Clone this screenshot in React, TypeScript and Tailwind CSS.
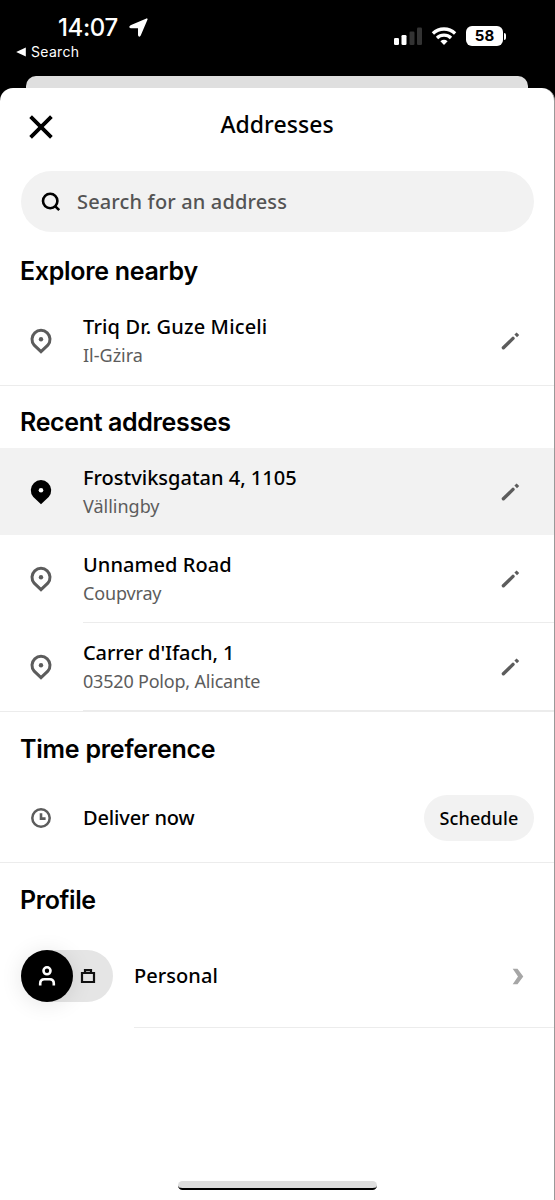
import type { ReactNode } from "react";

const body = "font-['Noto_Sans','Liberation_Sans',sans-serif]";

function PinIcon({ filled = false }: { filled?: boolean }) {
  return (
    <svg width="22" height="26" viewBox="0 0 22 26" className="block">
      <path
        d="M4.2 17.2A9 9 0 1 1 17.8 17.2L11 23.6Z"
        fill={filled ? "#000" : "none"}
        stroke={filled ? "#000" : "#5c5c5c"}
        strokeWidth={filled ? 2.4 : 3}
      />
      <circle cx="11" cy="11.2" r={filled ? 2.3 : 2.2} fill={filled ? "#fff" : "#5c5c5c"} />
    </svg>
  );
}

function PencilIcon() {
  return (
    <svg width="20" height="20" viewBox="0 0 20 20" className="block">
      <path d="M3.4 16.8L13 7.4" stroke="#5c5c5c" strokeWidth="3.4" strokeLinecap="round" />
      <path d="M14.4 3.6L16.6 1.4L19.2 4L17 6.2Z" fill="#5c5c5c" />
    </svg>
  );
}

function ClockIcon() {
  return (
    <svg width="22" height="22" viewBox="0 0 22 22" fill="none" stroke="#5c5c5c" className="block">
      <circle cx="11" cy="11" r="8.7" strokeWidth="2.5" />
      <path d="M11 6.2V11.6H15.6" strokeWidth="2.6" />
    </svg>
  );
}

function StatusBar() {
  return (
    <div className="flex h-[76px] justify-between font-['Inter','Liberation_Sans',sans-serif] text-white">
      <div>
        <div className="flex h-[41px] items-end gap-[11px] pl-[58px]">
          <span className="text-[24px] leading-[26px] font-medium tracking-[-0.4px]">14:07</span>
          <svg width="19" height="19" viewBox="0 0 19 19" className="mb-[4px]">
            <path d="M17.8 1.2L11 17.2Q10.3 18.6 9.8 17V9.4H1.9Q0.3 9 1.8 8.1Z" fill="#fff" stroke="#fff" strokeWidth="1.6" strokeLinejoin="round" />
          </svg>
        </div>
        <div className="mt-[2px] flex items-center gap-[5px] pl-4">
          <svg width="10" height="10" viewBox="0 0 10 10">
            <path d="M0.2 5L9.8 0.4V9.6Z" fill="#fff" />
          </svg>
          <span className="text-[14px] leading-[18px] tracking-[0.3px]">Search</span>
        </div>
      </div>
      <div className="mt-[26px] flex h-[20px] items-center pr-[49px]">
        <svg width="30" height="20" viewBox="0 0 30 20">
          <rect x="1" y="12" width="5" height="7" rx="1.3" fill="#fff" />
          <rect x="8.5" y="9" width="5" height="10" rx="1.3" fill="#fff" />
          <rect x="16.5" y="5.5" width="5" height="13.5" rx="1.3" fill="#333" />
          <rect x="24" y="1.5" width="5" height="17.5" rx="1.3" fill="#333" />
        </svg>
        <svg width="26" height="20" viewBox="0 0 26 20" fill="none" stroke="#fff" strokeWidth="3.3" className="ml-[8px]">
          <path d="M1.9 7.5A16 16 0 0 1 24.1 7.5" />
          <path d="M6 12A10 10 0 0 1 20 12" />
          <path d="M9.4 15.3Q13 12.4 16.6 15.3L13 18.9Z" fill="#fff" stroke="none" />
        </svg>
        <div className="ml-[9px] flex h-[20px] w-[37px] items-center justify-center rounded-[6px] bg-white text-[15px] font-bold text-black">
          58
        </div>
        <div className="ml-px h-[7px] w-[2px] rounded-r-full bg-white" />
      </div>
    </div>
  );
}

function SectionTitle({ children, className }: { children: ReactNode; className: string }) {
  return (
    <h2 className={`h-[62px] pl-[20px] font-['Inter','Liberation_Sans',sans-serif] text-[25px] leading-[33px] font-semibold whitespace-nowrap ${className}`}>
      {children}
    </h2>
  );
}

type AddressProps = {
  title: string;
  subtitle: string;
  titleClass: string;
  subtitleClass: string;
  active?: boolean;
};

function AddressRow({ title, subtitle, titleClass, subtitleClass, active }: AddressProps) {
  return (
    <div className={`flex h-[87px] items-center pr-[34px] pl-[30px] ${active ? "bg-[#f2f2f2]" : ""}`}>
      <PinIcon filled={active} />
      <div className="ml-[31px] flex-1 whitespace-nowrap">
        <div className={`text-[20px] leading-[28px] font-medium ${titleClass}`}>{title}</div>
        <div className={`text-[18px] leading-[28px] text-[#5c5c5c] ${subtitleClass}`}>{subtitle}</div>
      </div>
      <PencilIcon />
    </div>
  );
}

const Divider = () => <div className="h-px bg-[#ececec]" />;

export default function App() {
  return (
    <div className="h-[1200px] w-[555px] overflow-hidden bg-black">
      <StatusBar />
      <div className="mr-[27px] ml-[26px] h-3 rounded-t-[10px] bg-[#dfdfdf]" />
      <main className={`relative h-[1112px] overflow-hidden rounded-t-[13px] border-r border-[#999] bg-white text-black ${body}`}>
        <header className="relative flex h-[83px] items-start justify-center pt-[20px]">
          <svg width="24" height="24" viewBox="0 0 24 24" className="absolute top-[27px] left-[29px]">
            <path d="M1.6 1.6L22.4 22.4M22.4 1.6L1.6 22.4" stroke="#000" strokeWidth="3.8" />
          </svg>
          <h1 className="text-[23px] leading-[32px] font-medium tracking-[0.05px]">Addresses</h1>
        </header>

        <div className="mr-[20px] ml-[21px] flex h-[61px] items-center rounded-full bg-[#f2f2f2] pl-[20px]">
          <svg width="20" height="20" viewBox="0 0 20 20" fill="none" stroke="#000" strokeWidth="2.6">
            <circle cx="9.2" cy="9" r="7.2" />
            <path d="M13.8 13.8L18.2 18.2" />
          </svg>
          <span className="ml-[16px] text-[20px] leading-[28px] font-medium tracking-[0.15px] text-[#545454]">Search for an address</span>
        </div>

        <section className="pt-[3px]">
          <SectionTitle className="pt-[20px] tracking-[-0.3px]">Explore nearby</SectionTitle>
          <AddressRow title="Triq Dr. Guze Miceli" subtitle="Il-Gżira" titleClass="tracking-[0.15px]" subtitleClass="tracking-[0px]" />
          <div className="pt-px">
            <Divider />
          </div>
        </section>

        <section>
          <SectionTitle className="pt-[20px] tracking-[-0.35px]">Recent addresses</SectionTitle>
          <AddressRow active title="Frostviksgatan 4, 1105" subtitle="Vällingby" titleClass="tracking-[0px]" subtitleClass="tracking-[0px]" />
          <AddressRow title="Unnamed Road" subtitle="Coupvray" titleClass="tracking-[0.05px]" subtitleClass="tracking-[-0.15px]" />
          <div className="pl-[83px]">
            <Divider />
          </div>
          <AddressRow title="Carrer d'Ifach, 1" subtitle="03520 Polop, Alicante" titleClass="tracking-[-0.1px]" subtitleClass="tracking-[-0.2px]" />
          <div className="pl-[83px]">
            <Divider />
          </div>
          <Divider />
        </section>

        <section>
          <SectionTitle className="pt-[21px] tracking-[-0.25px]">Time preference</SectionTitle>
          <div className="flex h-[88px] items-center pr-[20px] pl-[30px]">
            <ClockIcon />
            <span className="ml-[31px] flex-1 text-[20px] leading-[28px] font-medium tracking-[-0.15px]">Deliver now</span>
            <button className="h-[46px] w-[110px] rounded-full bg-[#f2f2f2] text-[18px] font-medium tracking-[0.1px]">Schedule</button>
          </div>
          <Divider />
        </section>

        <section>
          <SectionTitle className="pt-[21px] tracking-[-0.4px]">Profile</SectionTitle>
          <div className="flex h-[102px] items-center pr-[30px] pl-[21px]">
            <div className="flex h-[52px] w-[92px] items-center rounded-full bg-[#e5e5e5]">
              <div className="flex size-[52px] items-center justify-center rounded-full bg-black pr-px shadow-[0_2px_22px_rgba(0,0,0,0.1)]">
                <svg width="18" height="22" viewBox="0 0 18 22" fill="none" stroke="#fff" strokeWidth="2.6">
                  <circle cx="9" cy="5.8" r="3.5" />
                  <path d="M2.2 20.5V18.4Q2.2 14.2 6.4 14.2H11.6Q15.8 14.2 15.8 18.4V20.5" />
                </svg>
              </div>
              <svg width="16" height="16" viewBox="0 0 16 16" fill="none" stroke="#111" strokeWidth="2.2" className="ml-[7px]">
                <path d="M2 5H14V14H2ZM5 5V2.2H11V5" />
              </svg>
            </div>
            <span className="ml-[21px] flex-1 text-[20px] leading-[28px] font-medium tracking-[0.05px]">Personal</span>
            <svg width="12" height="17" viewBox="0 0 12 17">
              <path d="M0.7 0.8H5.5L11.3 8.5L5.5 16.2H0.7L6 8.5Z" fill="#a6a6a6" />
            </svg>
          </div>
          <div className="pl-[134px]">
            <Divider />
          </div>
        </section>

        <div className="absolute bottom-[10px] left-[178px] h-[9px] w-[199px] rounded-full border-b-[2px] border-black bg-[#dedede]" />
      </main>
    </div>
  );
}
